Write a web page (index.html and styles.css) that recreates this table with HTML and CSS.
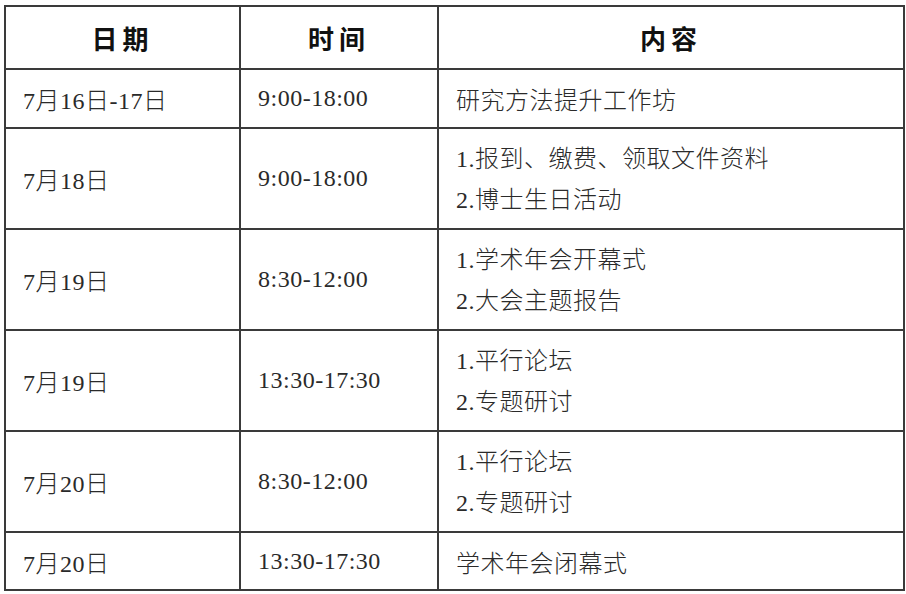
FILE: index.html
```html
<!DOCTYPE html>
<html lang="zh-CN">
<head>
<meta charset="utf-8">
<title>日程安排</title>
<link rel="stylesheet" href="styles.css">
</head>
<body>
<div class="page">
<table class="schedule">
<colgroup>
<col class="c-date">
<col class="c-time">
<col class="c-content">
</colgroup>
<thead>
<tr class="r-head"><th>日期</th><th>时间</th><th>内容</th></tr>
</thead>
<tbody>
<tr class="r-one"><td>7月16日-17日</td><td>9:00-18:00</td><td>研究方法提升工作坊</td></tr>
<tr class="r-two"><td>7月18日</td><td>9:00-18:00</td><td class="multi"><div class="ln">1.报到、缴费、领取文件资料</div><div class="ln">2.博士生日活动</div></td></tr>
<tr class="r-two"><td>7月19日</td><td>8:30-12:00</td><td class="multi"><div class="ln">1.学术年会开幕式</div><div class="ln">2.大会主题报告</div></td></tr>
<tr class="r-two"><td>7月19日</td><td>13:30-17:30</td><td class="multi"><div class="ln">1.平行论坛</div><div class="ln">2.专题研讨</div></td></tr>
<tr class="r-two"><td>7月20日</td><td>8:30-12:00</td><td class="multi"><div class="ln">1.平行论坛</div><div class="ln">2.专题研讨</div></td></tr>
<tr class="r-last"><td>7月20日</td><td>13:30-17:30</td><td>学术年会闭幕式</td></tr>
</tbody>
</table>
</div>
</body>
</html>
```

FILE: styles.css
```css
html, body {
  margin: 0;
  padding: 0;
  background: #ffffff;
}
.page {
  padding: 5px 0 0 4px;
}
.schedule {
  border-collapse: collapse;
  table-layout: fixed;
  width: 899px;
  font-family: "Liberation Serif", "Noto Sans CJK SC", serif;
  color: #2a2a2a;
}
.c-date { width: 235px; }
.c-time { width: 198px; }
.c-content { width: 466px; }
.schedule th,
.schedule td {
  border: 2px solid #3a3a3a;
  padding: 0 0 0 17px;
  vertical-align: middle;
  text-align: left;
  font-size: 24px;
  font-weight: 300;
  letter-spacing: 0.5px;
  white-space: nowrap;
}
.schedule th {
  text-align: center;
  padding: 0;
  font-family: "Noto Sans CJK SC", sans-serif;
  font-weight: 700;
  font-size: 26px;
  letter-spacing: 5px;
  color: #111;
  height: 61px;
}
.r-one td { height: 57px; }
.r-two td { height: 99px; }
.r-last td { height: 56px; }
.r-two td.multi {
  padding-top: 3px;
  height: 96px;
}
.ln {
  line-height: 41px;
}
```
